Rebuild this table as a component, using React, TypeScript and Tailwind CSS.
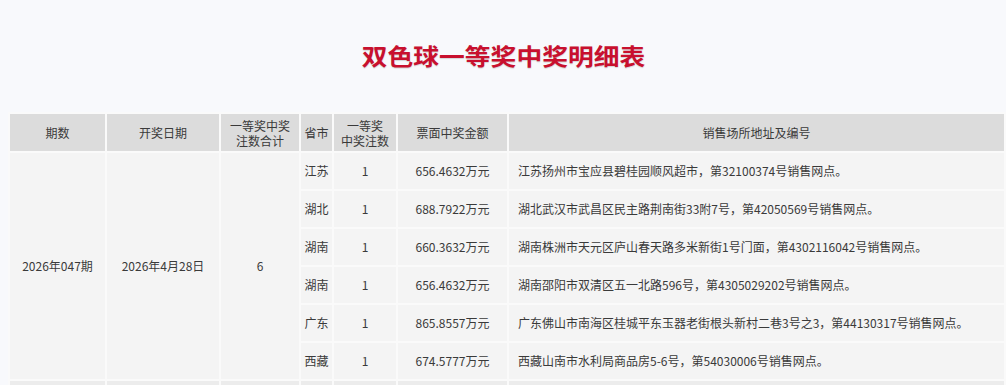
import React from 'react';

interface WinRow {
  province: string;
  count: number;
  amount: string;
  address: string;
}

const rows: WinRow[] = [
  { province: '江苏', count: 1, amount: '656.4632万元', address: '江苏扬州市宝应县碧桂园顺风超市，第32100374号销售网点。' },
  { province: '湖北', count: 1, amount: '688.7922万元', address: '湖北武汉市武昌区民主路荆南街33附7号，第42050569号销售网点。' },
  { province: '湖南', count: 1, amount: '660.3632万元', address: '湖南株洲市天元区庐山春天路多米新街1号门面，第4302116042号销售网点。' },
  { province: '湖南', count: 1, amount: '656.4632万元', address: '湖南邵阳市双清区五一北路596号，第4305029202号销售网点。' },
  { province: '广东', count: 1, amount: '865.8557万元', address: '广东佛山市南海区桂城平东玉器老街根头新村二巷3号之3，第44130317号销售网点。' },
  { province: '西藏', count: 1, amount: '674.5777万元', address: '西藏山南市水利局商品房5-6号，第54030006号销售网点。' },
];

const th = 'border-2 border-[#fafafa] bg-[#dcdcdc] font-normal text-center align-middle leading-[15px]';
const td = 'border-2 border-[#fafafa] bg-[#f4f4f4] h-[38px] text-center align-middle';

export default function App() {
  return (
    <div
      className="min-h-[385px] bg-[#f8f9fc] px-[8px] text-[12px] text-[#3a3a3a]"
      style={{ fontFamily: '"Noto Sans CJK SC", "Noto Sans", sans-serif' }}
    >
      <div className="flex h-[112px] items-start justify-center pt-[40px]">
        <h1 className="scale-x-[1.12] text-[23px] font-bold leading-[30px] text-[#c8102e] [text-shadow:0_1px_1px_rgba(0,0,0,0.15)]">
          双色球一等奖中奖明细表
        </h1>
      </div>

      <table className="w-[996px] table-fixed border-collapse">
        <colgroup>
          <col className="w-[97px]" />
          <col className="w-[114px]" />
          <col className="w-[80px]" />
          <col className="w-[33px]" />
          <col className="w-[64px]" />
          <col className="w-[111px]" />
          <col className="w-[497px]" />
        </colgroup>
        <thead>
          <tr className="h-[39px]">
            <th className={th}>期数</th>
            <th className={th}>开奖日期</th>
            <th className={th}>
              一等奖中奖
              <br />
              注数合计
            </th>
            <th className={th}>省市</th>
            <th className={th}>
              一等奖
              <br />
              中奖注数
            </th>
            <th className={th}>票面中奖金额</th>
            <th className={th}>销售场所地址及编号</th>
          </tr>
        </thead>
        <tbody>
          {rows.map((r, i) => (
            <tr key={i}>
              {i === 0 && (
                <>
                  <td rowSpan={rows.length} className={td}>2026年047期</td>
                  <td rowSpan={rows.length} className={td}>2026年4月28日</td>
                  <td rowSpan={rows.length} className={td}>6</td>
                </>
              )}
              <td className={td}>{r.province}</td>
              <td className={td}>{r.count}</td>
              <td className={td}>{r.amount}</td>
              <td className={`${td} !text-left pl-[9px]`}>{r.address}</td>
            </tr>
          ))}
          <tr>
            <td className={`${td} !bg-[#ececec]`}></td>
            <td className={`${td} !bg-[#ececec]`}></td>
            <td className={`${td} !bg-[#ececec]`}></td>
            <td className={`${td} !bg-[#ececec]`}></td>
            <td className={`${td} !bg-[#ececec]`}></td>
            <td className={`${td} !bg-[#ececec]`}></td>
            <td className={`${td} !bg-[#ececec]`}></td>
          </tr>
        </tbody>
      </table>
    </div>
  );
}
